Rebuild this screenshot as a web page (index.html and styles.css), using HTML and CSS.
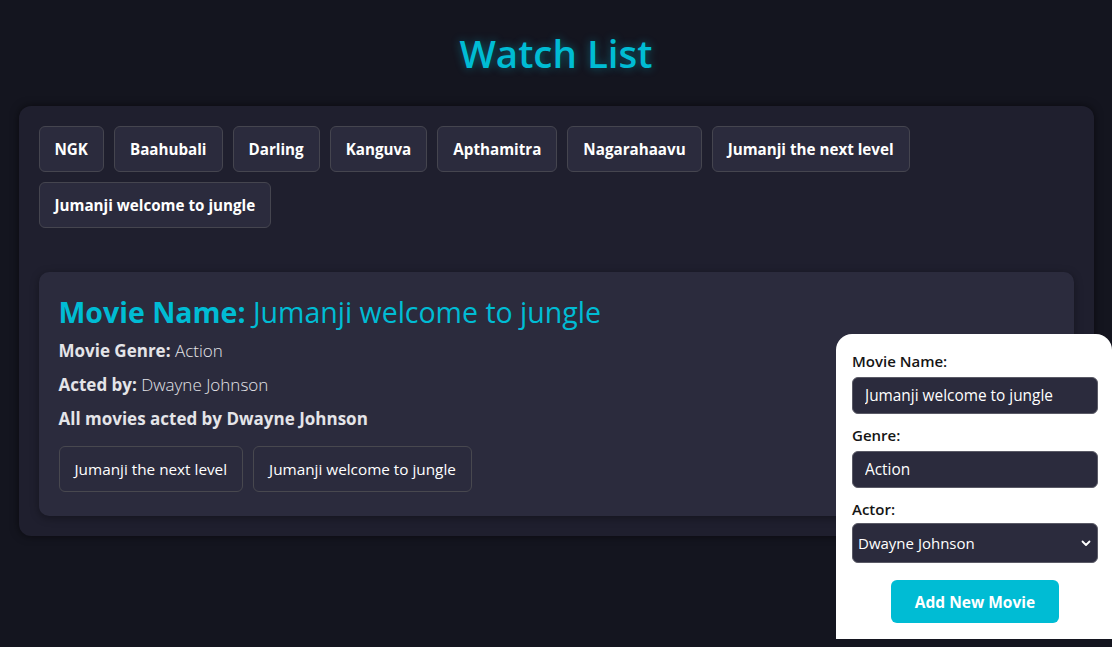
FILE: index.html
```html
<!DOCTYPE html>
<html lang="en">
<head>
<meta charset="utf-8">
<title>Watch List</title>
<link rel="stylesheet" href="styles.css">
</head>
<body>
  <header class="header">
    <h1 class="title">Watch List</h1>
  </header>
  <main class="panel">
    <div class="chips">
      <button class="chip">NGK</button>
      <button class="chip">Baahubali</button>
      <button class="chip">Darling</button>
      <button class="chip">Kanguva</button>
      <button class="chip">Apthamitra</button>
      <button class="chip">Nagarahaavu</button>
      <button class="chip">Jumanji the next level</button>
      <button class="chip">Jumanji welcome to jungle</button>
    </div>
    <section class="card">
      <h2 class="card-title"><strong>Movie Name:</strong> Jumanji welcome to jungle</h2>
      <p class="line"><strong>Movie Genre:</strong> Action</p>
      <p class="line"><strong>Acted by:</strong> Dwayne Johnson</p>
      <p class="line"><strong>All movies acted by Dwayne Johnson</strong></p>
      <div class="movie-chips">
        <button class="movie-chip">Jumanji the next level</button>
        <button class="movie-chip">Jumanji welcome to jungle</button>
      </div>
    </section>
  </main>
  <form class="add-form">
    <label class="label">Movie Name:</label>
    <input class="field" type="text" value="Jumanji welcome to jungle">
    <label class="label">Genre:</label>
    <input class="field" type="text" value="Action">
    <label class="label">Actor:</label>
    <div class="select-wrap">
      <select class="select">
        <option>Dwayne Johnson</option>
      </select>
      <svg class="chevron" width="10" height="10" viewBox="0 0 10 10"><path d="M1.5 3.5 L5 7 L8.5 3.5" fill="none" stroke="#fff" stroke-width="1.8" stroke-linecap="round" stroke-linejoin="round"/></svg>
    </div>
    <div class="actions">
      <button class="add-btn" type="button">Add New Movie</button>
    </div>
  </form>
</body>
</html>
```

FILE: styles.css
```css
* { box-sizing: border-box; }

html, body {
  margin: 0;
  padding: 0;
  background: #14151f;
  font-family: "Open Sans", "Noto Sans", sans-serif;
  color: #e6e6e6;
}

body { min-height: 647px; }

.header {
  height: 106px;
  display: flex;
  align-items: center;
  justify-content: center;
}

.title {
  margin: 0;
  font-size: 38.5px;
  font-weight: 600;
  color: #00bcd4;
  text-shadow: 0 0 10px rgba(0, 188, 212, 0.45);
  line-height: 1;
}

.panel {
  width: 1075px;
  margin: 0 auto;
  background: #1f1f2e;
  border-radius: 12px;
  padding: 20px;
  box-shadow: 0 0 8px rgba(0, 0, 0, 0.55);
}

.chips {
  display: flex;
  flex-wrap: wrap;
  gap: 10px;
  margin-bottom: 44px;
}

.chip {
  font-family: inherit;
  font-size: 15.2px;
  font-weight: 700;
  line-height: 20px;
  color: #ffffff;
  background: #2b2b3d;
  border: 1px solid #45454f;
  border-radius: 6px;
  padding: 12px 15px;
}

.card {
  background: #2b2b3d;
  border-radius: 10px;
  padding: 20px 20px 24px;
  box-shadow: 0 2px 8px rgba(0, 0, 0, 0.35);
}

.card-title {
  margin: 0 0 7px;
  font-size: 28.5px;
  line-height: 40px;
  font-weight: 400;
  color: #00bcd4;
}

.card-title strong { font-weight: 700; }

.line {
  margin: 0 0 10px;
  font-size: 17px;
  line-height: 24px;
  font-weight: 300;
  color: #e4e4e8;
}

.line strong { font-weight: 700; }

.movie-chips {
  display: flex;
  gap: 10px;
  margin-top: 15px;
}

.movie-chip {
  font-family: inherit;
  font-size: 15.3px;
  font-weight: 400;
  line-height: 20px;
  color: #ffffff;
  background: transparent;
  border: 1px solid #48484f;
  border-radius: 6px;
  padding: 12px 15px;
}

.add-form {
  position: fixed;
  right: 0;
  bottom: 8px;
  width: 276px;
  height: 305px;
  background: #ffffff;
  border-radius: 16px 16px 0 0;
  padding: 16px 14px 16px 16px;
  display: flex;
  flex-direction: column;
}

.label {
  display: block;
  font-size: 15px;
  font-weight: 600;
  line-height: 22px;
  color: #151515;
  margin-bottom: 5px;
}

.field {
  display: block;
  width: 100%;
  height: 37px;
  background: #2b2b3d;
  border: 1px solid #5a5a66;
  border-radius: 6px;
  color: #ffffff;
  font-family: inherit;
  font-size: 15.4px;
  padding: 0 12px;
  margin-bottom: 10px;
  outline: none;
}

.select-wrap {
  position: relative;
  margin-top: -2px;
}

.select {
  display: block;
  width: 100%;
  height: 40px;
  appearance: none;
  -webkit-appearance: none;
  background: #2b2b3d;
  border: 1px solid #5a5a66;
  border-radius: 6px;
  color: #ffffff;
  font-family: inherit;
  font-size: 15px;
  padding: 0 24px 0 5px;
}

.chevron {
  position: absolute;
  right: 7px;
  top: 15px;
}

.actions {
  display: flex;
  justify-content: center;
  margin-top: 17px;
}

.add-btn {
  font-family: inherit;
  font-size: 15.5px;
  font-weight: 700;
  color: #ffffff;
  background: #00bcd4;
  border: none;
  border-radius: 6px;
  height: 43px;
  width: 168px;
}
```
